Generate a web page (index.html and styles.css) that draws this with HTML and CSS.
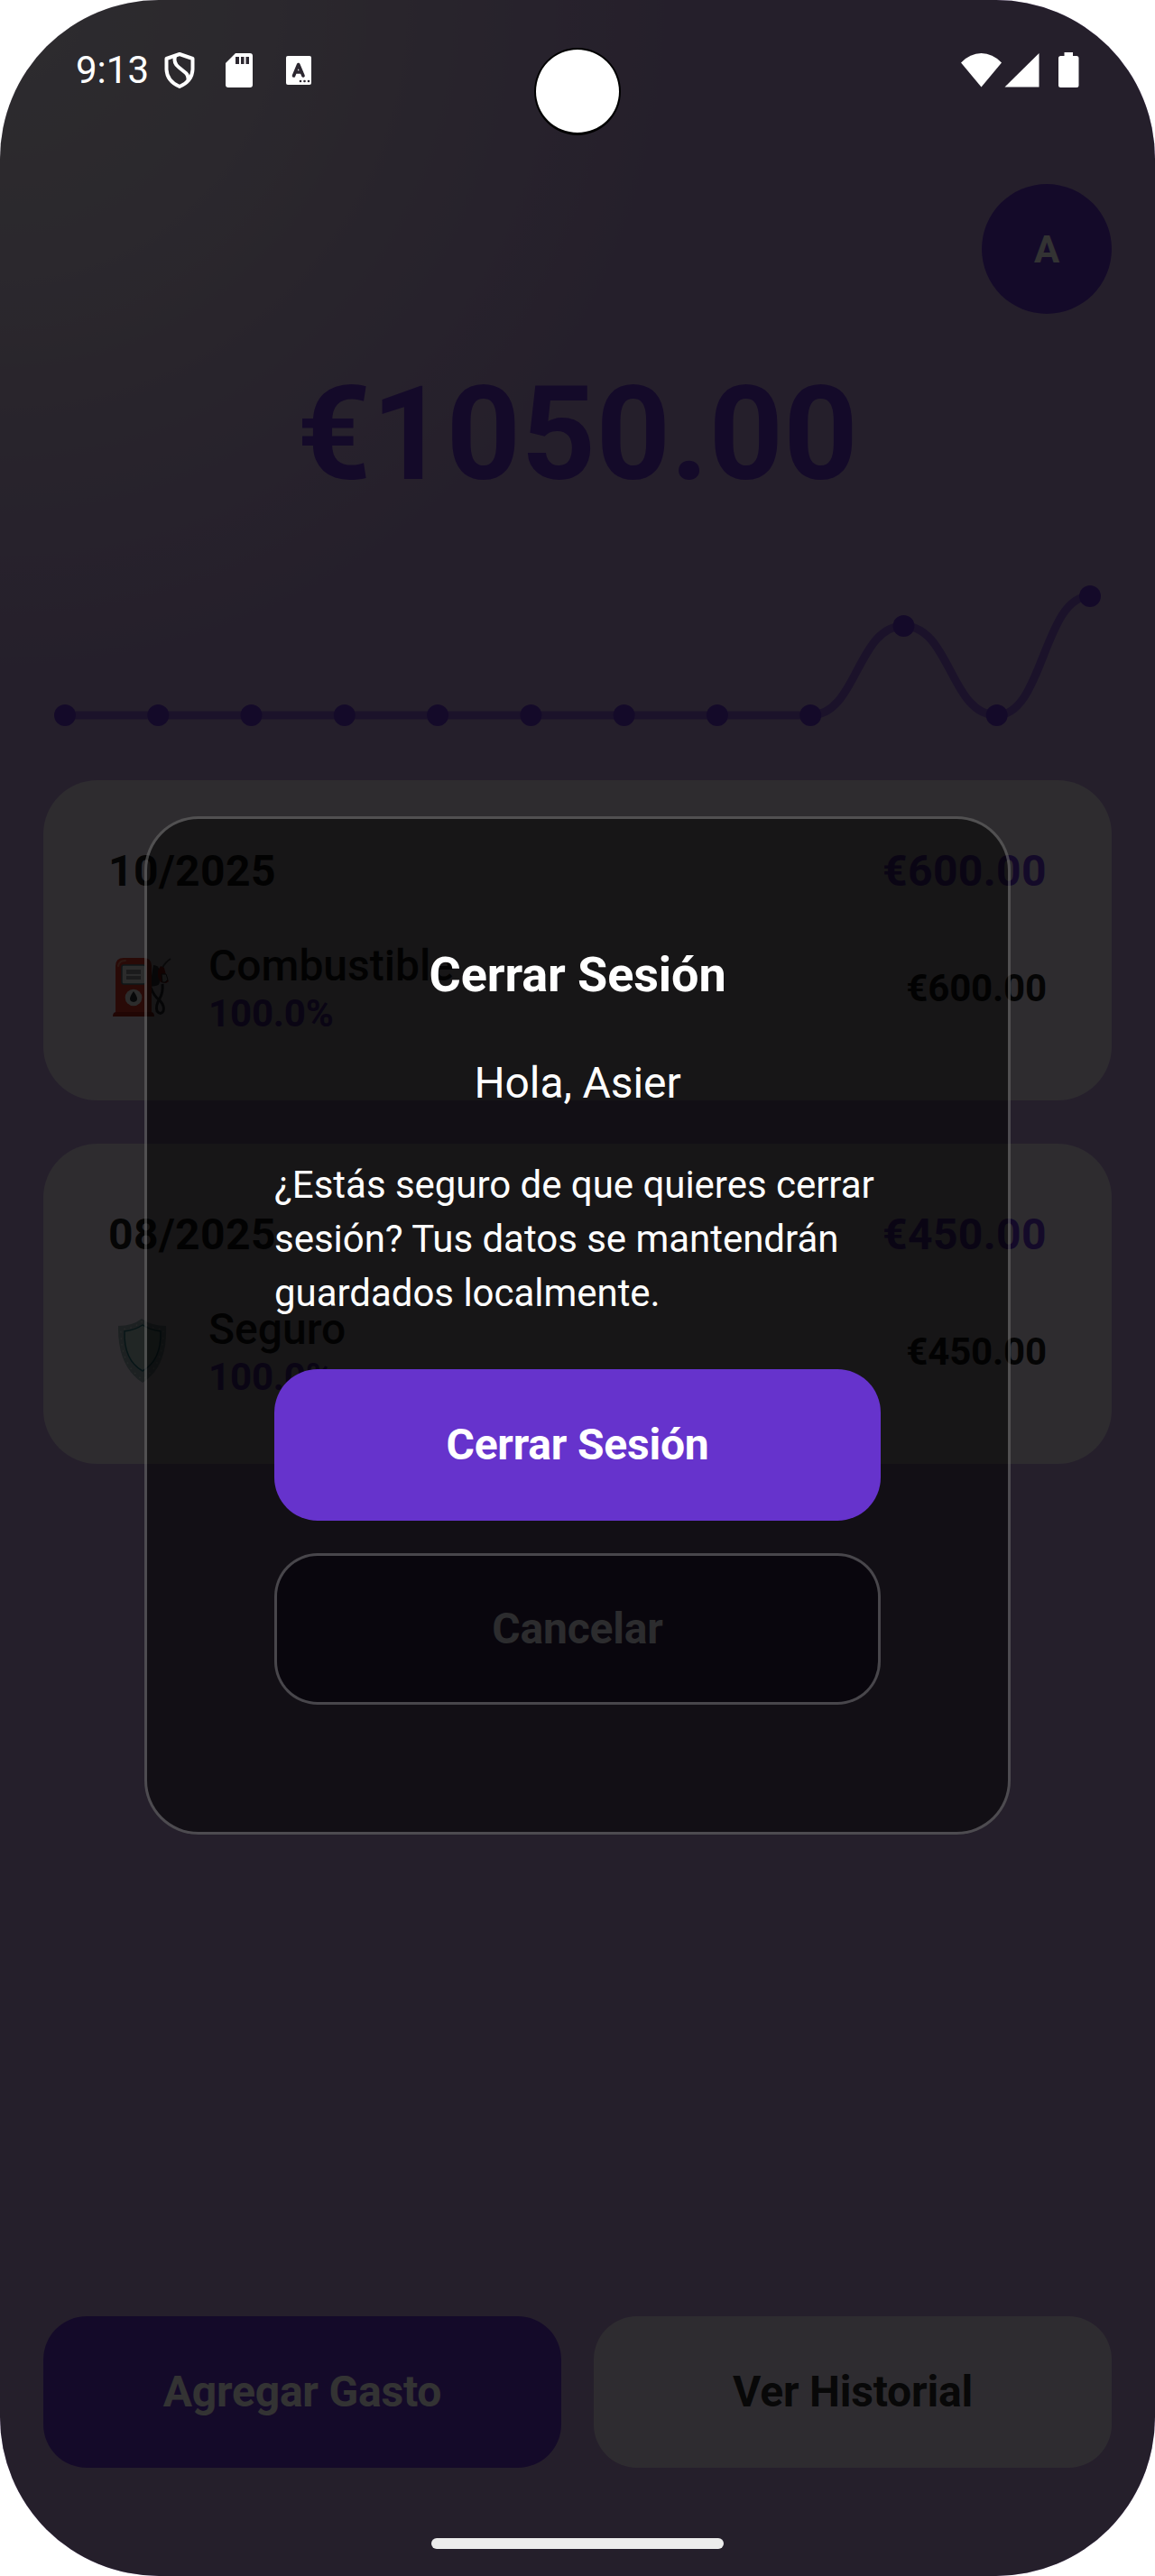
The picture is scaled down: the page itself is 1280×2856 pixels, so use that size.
FILE: index.html
```html
<!DOCTYPE html>
<html lang="es">
<head>
<meta charset="utf-8">
<title>Gastos</title>
<link rel="stylesheet" href="styles.css">
</head>
<body>
<div class="phone">
  <main class="home">
    <div class="avatar">A</div>
    <h1 class="balance">€1050.00</h1>
    <svg class="chart" viewBox="0 0 1184 204">
      <path class="chart-line" d="M24 180H850.2C901.8 180 901.8 81 953.5 81S1005.1 180 1056.7 180S1108.4 48 1160 48"/>
      <g class="chart-dots">
        <circle cx="24" cy="180" r="12"/><circle cx="127.3" cy="180" r="12"/><circle cx="230.5" cy="180" r="12"/>
        <circle cx="333.8" cy="180" r="12"/><circle cx="437.1" cy="180" r="12"/><circle cx="540.4" cy="180" r="12"/>
        <circle cx="643.6" cy="180" r="12"/><circle cx="746.9" cy="180" r="12"/><circle cx="850.2" cy="180" r="12"/>
        <circle cx="953.5" cy="81" r="12"/><circle cx="1056.7" cy="180" r="12"/><circle cx="1160" cy="48" r="12"/>
      </g>
    </svg>
    <section class="months">
      <article class="card">
        <header class="card-head"><span>10/2025</span><span class="accent">€600.00</span></header>
        <div class="item">
          <svg class="emoji" viewBox="10 4 75 82">
            <path d="M60 25q6 0 7 6v12q0 4-4 5l-7 1" fill="#4a4a50"/>
            <path d="M57 50q4 10 10 14 6 7 4 12-3 5-7 0-2-6 3-14 4-7 3-16" fill="none" stroke="#34393d" stroke-width="3"/>
            <path d="M70 28q3-6 9-10" fill="none" stroke="#5a5a5e" stroke-width="2"/>
            <path d="M65 31l3-5 4 2 2 8 3 7-3 2-6-1-3-6z" fill="#b52218"/>
            <path d="M69 35h5l2 6-3 3h-3z" fill="#ddd" stroke="#333" stroke-width="1"/>
            <path d="M18 77V26q0-9 9-9h22q9 0 9 9v51z" fill="#cc3426"/>
            <path d="M21 26q1-6 8-6" fill="none" stroke="#e0775e" stroke-width="2" stroke-linecap="round"/>
            <rect x="25" y="25" width="26" height="21" rx="2" fill="#d9d9d9" stroke="#497078" stroke-width="1.5"/>
            <path d="M30 30h16v5H30zM30 37h16v4H30z" fill="#85858a"/>
            <circle cx="38" cy="61" r="9.3" fill="#ddd"/>
            <path d="M38 54q8 11 0 12-8-1 0-12z" fill="#252b30"/>
            <path d="M15 82q0-5 4-5h38q4 0 4 5z" fill="#a51f17"/>
          </svg>
          <div class="item-text"><span class="name">Combustible</span><span class="percent">100.0%</span></div>
          <span class="amount">€600.00</span>
        </div>
      </article>
      <article class="card">
        <header class="card-head"><span>08/2025</span><span class="accent">€450.00</span></header>
        <div class="item">
          <svg class="emoji" viewBox="10 5 75 82">
            <path d="M47 15q11 8 27 8 2 45-26 63-28-18-27-63 16 0 26-8z" fill="#8fa5a8"/>
            <path d="M47 18.500q11 8 24 8 1 39-23 56-25-17-24-56 13 0 23-8z" fill="none" stroke="#c2cdcd" stroke-width="1.600" stroke-linecap="round" stroke-dasharray="0.1 7"/>
            <path d="M48 22q9 6 20 7 1 32-20 44-21-12-20-44 11-1 20-7z" fill="#a3bcba" stroke="#246a72" stroke-width="1.500"/>
          </svg>
          <div class="item-text"><span class="name">Seguro</span><span class="percent">100.0%</span></div>
          <span class="amount">€450.00</span>
        </div>
      </article>
    </section>
    <nav class="actions">
      <button class="btn btn-primary">Agregar Gasto</button>
      <button class="btn btn-light">Ver Historial</button>
    </nav>
  </main>

  <div class="scrim">
    <div class="dialog">
      <h2 class="dialog-title">Cerrar Sesión</h2>
      <p class="greeting">Hola, Asier</p>
      <p class="message">¿Estás seguro de que quieres cerrar sesión? Tus datos se mantendrán guardados localmente.</p>
      <button class="btn btn-primary">Cerrar Sesión</button>
      <button class="btn btn-outline">Cancelar</button>
    </div>
  </div>

  <div class="status">
    <span class="time">9:13</span>
    <svg class="status-left" viewBox="0 0 190 60">
      <g fill="none" stroke="#fff" stroke-width="4" stroke-linejoin="round">
        <path d="M29 12L43.500 17V29Q43 42 29 48Q15 42 14.500 29V17Z"/>
        <path d="M24 14Q22 22 28 26.500L36 33Q39 36 38.500 42"/>
      </g>
      <path d="M91 11h16a3 3 0 0 1 3 3v32a3 3 0 0 1-3 3H83a3 3 0 0 1-3-3V22z" fill="#fff"/>
      <path d="M91 15h4v8h-4zM97 15h3.500v8H97zM102.500 15h3.500v8h-3.500z" fill="#2c2730"/>
      <rect x="147" y="14" width="28" height="32" rx="2" fill="#fff"/>
      <path d="M155.500 36L160.700 23.500L166 36M157.500 32h7" fill="none" stroke="#2c2730" stroke-width="3.600" stroke-linecap="round" stroke-linejoin="round"/>
      <g fill="#2c2730"><circle cx="163" cy="42" r="1.300"/><circle cx="167.500" cy="42" r="1.300"/><circle cx="172" cy="42" r="1.300"/></g>
    </svg>
    <svg class="status-right" viewBox="0 0 134 40" fill="#fff">
      <path d="M0 11.500Q10 1 22.500 1T45 11.500L22.500 38.500z"/>
      <path d="M48.500 38.500L86.500 1v37.500z"/>
      <path d="M114.500 0h9.500v4h4a2.500 2.500 0 0 1 2.500 2.500v30A2.500 2.500 0 0 1 128 39h-17.500a2.500 2.500 0 0 1-2.500-2.500v-30a2.500 2.500 0 0 1 2.500-2.500h4z"/>
    </svg>
  </div>
  <div class="camera"></div>
  <div class="home-bar"></div>
</div>
</body>
</html>
```
FILE: styles.css
```css
* { box-sizing: border-box; margin: 0; padding: 0; }
body { background: #fff; font-family: Roboto, "Liberation Sans", sans-serif; }
.phone {
  position: relative;
  width: 1280px;
  height: 2856px;
  border-radius: 176px;
  overflow: hidden;
}
.home {
  height: 100%;
  padding: 204px 48px 120px;
  display: flex;
  flex-direction: column;
  color: #1a1a1a;
  background: radial-gradient(circle at 0 0, #e1d9e6 0, #d6c8df 280px, #c8b4db 480px, #b99bd7 760px);
}
.avatar {
  align-self: flex-end;
  width: 144px;
  height: 144px;
  border-radius: 50%;
  background: #6633cc;
  color: #fff;
  font-size: 42px;
  font-weight: 700;
  line-height: 145px;
  text-align: center;
}
.balance {
  margin-top: 49px;
  font-size: 144px;
  font-weight: 700;
  line-height: 169px;
  letter-spacing: .3px;
  text-align: center;
  color: #6633cc;
}
.chart { display: block; height: 204px; margin-top: 47px; }
.chart-line { fill: none; stroke: #6633cc; stroke-opacity: .6; stroke-width: 9; }
.chart-dots { fill: #6633cc; }
.months { display: flex; flex-direction: column; gap: 48px; margin-top: 48px; }
.card {
  height: 355px;
  padding: 72px;
  border-radius: 60px;
  background: #e4daec;
}
.card-head {
  display: flex;
  justify-content: space-between;
  font-size: 48px;
  font-weight: 700;
  line-height: 57px;
  letter-spacing: .4px;
}
.accent, .percent { color: #6633cc; }
.item { display: flex; align-items: center; height: 106px; margin-top: 48px; }
.emoji { width: 75px; height: 82px; margin: -10px 36px 0 0; }
.item-text { flex: 1; display: flex; flex-direction: column; }
.name { font-size: 48px; font-weight: 500; line-height: 57px; }
.percent, .amount { font-size: 42px; font-weight: 700; line-height: 49px; letter-spacing: -.15px; }
.actions { display: flex; gap: 36px; margin-top: auto; }
.btn {
  display: block;
  flex: 1;
  width: 100%;
  height: 168px;
  border: 0;
  border-radius: 48px;
  font: 700 48px/168px Roboto, "Liberation Sans", sans-serif;
  letter-spacing: -.2px;
  text-align: center;
}
.btn-primary { background: #6633cc; color: #fff; }
.btn-light { background: #e6dcee; color: #2a2a2a; }

.scrim {
  position: absolute;
  inset: 0;
  display: flex;
  justify-content: center;
  align-items: flex-start;
  padding-top: 905px;
  background: rgba(0, 0, 0, .8);
}
.dialog {
  width: 960px;
  height: 1129px;
  padding: 141px;
  border: 3px solid rgba(255, 255, 255, .25);
  border-radius: 60px;
  background: rgba(0, 0, 0, .5);
  color: #fff;
}
.dialog-title { font-size: 54px; font-weight: 700; line-height: 63px; letter-spacing: -.1px; text-align: center; }
.greeting { margin-top: 60px; font-size: 48px; line-height: 57px; letter-spacing: -.1px; text-align: center; }
.message { margin: 55px 0 54px; font-size: 42px; line-height: 60px; letter-spacing: -.03px; }
.dialog .btn { width: 672px; }
.dialog .btn-outline {
  margin-top: 36px;
  border: 3px solid rgba(255, 255, 255, .26);
  background: rgba(4, 0, 8, .6);
  color: #2c2c2e;
  line-height: 162px;
}

.status {
  position: absolute;
  top: 48px;
  left: 84px;
  right: 81px;
  height: 60px;
  display: flex;
  color: #fff;
}
.time { width: 86px; font-size: 42px; line-height: 59px; }
.status-left { width: 190px; height: 60px; }
.status-right { width: 134px; height: 40px; margin: 10px 0 0 auto; }
.camera {
  position: absolute;
  top: 53px;
  left: 592px;
  width: 96px;
  height: 97px;
  border: 2px solid #000;
  border-bottom-width: 3px;
  border-radius: 50%;
  background: #fff;
}
.home-bar {
  position: absolute;
  left: 478px;
  bottom: 30px;
  width: 324px;
  height: 12px;
  border-radius: 6px;
  background: #ececec;
}
```
